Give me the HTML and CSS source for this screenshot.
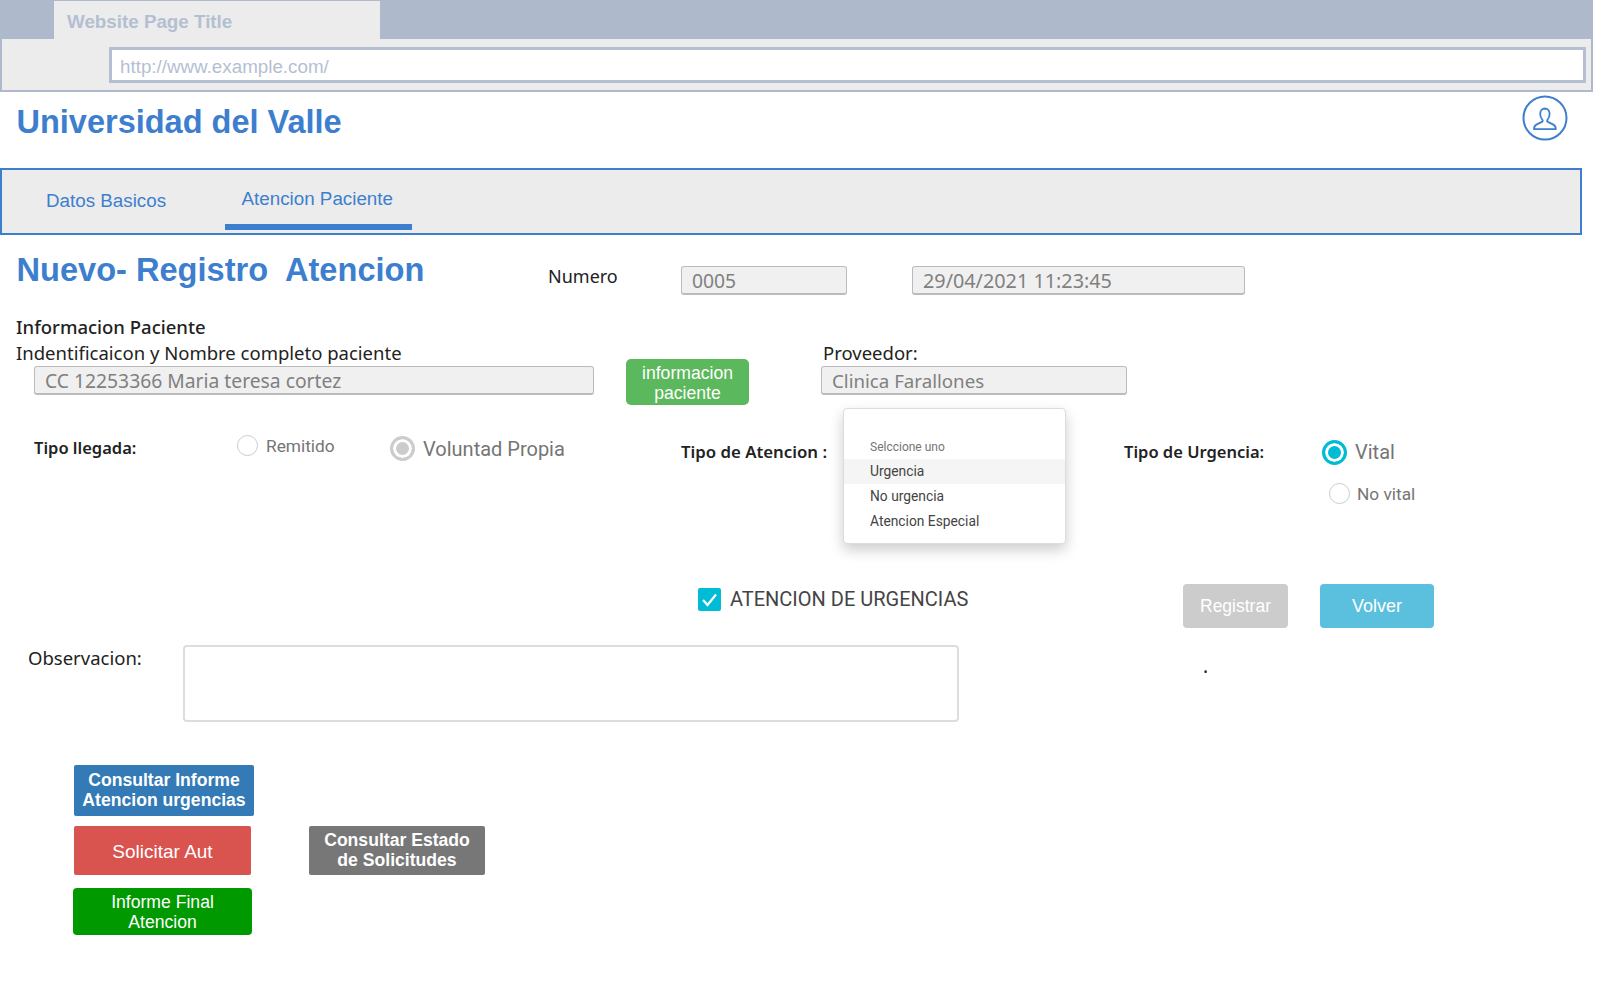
FILE: index.html
```html
<!DOCTYPE html>
<html lang="es">
<head>
    <meta charset="UTF-8">
    <title>Universidad del Valle</title>
    <link rel="stylesheet" href="styles.css">
</head>
<body>
    <!-- Barra del navegador -->
    <div class="browser">
        <div class="tab-strip">
            <div class="page-tab">Website Page Title</div>
        </div>
        <div class="address-bar">
            <div class="url">http://www.example.com/</div>
        </div>
    </div>

    <header class="site-header">
        <h1 class="site-title">Universidad del Valle</h1>
        <svg class="user-icon" width="48" height="48" viewBox="0 0 48 48" fill="none" stroke="#3d7fce">
            <circle cx="24" cy="24" r="21.500" stroke-width="2"/>
            <path stroke-width="1.800" stroke-linejoin="round" d="M24 14.500c-3 0-4.800 2.300-4.800 5.300 0 2.500.9 4.700 2.200 6 .6.700.3 1.700-.5 2.100l-5.500 2.700c-1.600.8-2.400 2.200-2.400 4.600h21.800c0-2.400-.8-3.800-2.400-4.600l-5.500-2.700c-.8-.4-1.100-1.400-.5-2.100 1.300-1.300 2.200-3.500 2.200-6 0-3-1.800-5.300-4.800-5.300z"/>
        </svg>
    </header>

    <nav class="tabs">
        <a class="tab-link">Datos Basicos</a>
        <a class="tab-link active">Atencion Paciente</a>
    </nav>

    <main>
        <div class="row-register">
            <h2 class="form-title">Nuevo- Registro&nbsp; Atencion</h2>
            <span class="numero-label">Numero</span>
            <input class="field field-numero" type="text" value="0005" disabled>
            <input class="field field-fecha" type="text" value="29/04/2021 11:23:45" disabled>
        </div>

        <div class="row-patient">
            <div class="patient-info">
                <div class="section-label section-title">Informacion Paciente</div>
                <div class="section-label">Indentificaicon y Nombre completo paciente</div>
                <input class="field field-paciente" type="text" value="CC 12253366 Maria teresa cortez" disabled>
            </div>
            <button class="btn btn-info-patient" type="button">informacion paciente</button>
            <div class="provider">
                <div class="section-label">Proveedor:</div>
                <input class="field field-proveedor" type="text" value="Clinica Farallones" disabled>
            </div>
        </div>

        <div class="row-types">
            <div class="type-label label-llegada">Tipo llegada:</div>
            <div class="option option-remitido">
                <span class="radio"></span>
                <span class="option-text">Remitido</span>
            </div>
            <div class="option option-voluntad">
                <span class="radio radio-disabled"></span>
                <span class="option-text large">Voluntad Propia</span>
            </div>
            <div class="type-label label-atencion">Tipo de Atencion :</div>
            <div class="dropdown">
                <div class="dropdown-head">Selccione uno</div>
                <div class="dropdown-item hover">Urgencia</div>
                <div class="dropdown-item">No urgencia</div>
                <div class="dropdown-item">Atencion Especial</div>
            </div>
            <div class="type-label label-urgencia">Tipo de Urgencia:</div>
            <div class="urgency-options">
                <div class="option option-vital">
                    <span class="radio radio-checked"></span>
                    <span class="option-text large">Vital</span>
                </div>
                <div class="option option-novital">
                    <span class="radio"></span>
                    <span class="option-text">No vital</span>
                </div>
            </div>
        </div>

        <div class="row-actions">
            <label class="check-urgencias">
                <svg class="checkbox" width="23" height="23" viewBox="0 0 23 23">
                    <rect width="23" height="23" rx="2" fill="#00bcd4"/>
                    <path d="M5 12l4.500 5 8.500-10.500" fill="none" stroke="#fff" stroke-width="2.200"/>
                </svg>
                ATENCION DE URGENCIAS
            </label>
            <button class="btn btn-registrar" type="button">Registrar</button>
            <button class="btn btn-volver" type="button">Volver</button>
        </div>

        <div class="row-notes">
            <label class="notes-label">Observacion:</label>
            <textarea class="notes"></textarea>
            <span class="dot">.</span>
        </div>

        <div class="row-reports">
            <div class="reports-left">
                <button class="btn btn-report btn-blue" type="button">Consultar Informe<br>Atencion urgencias</button>
                <button class="btn btn-report btn-red" type="button">Solicitar Aut</button>
                <button class="btn btn-report btn-green" type="button">Informe Final<br>Atencion</button>
            </div>
            <button class="btn btn-report btn-gray" type="button">Consultar Estado<br>de Solicitudes</button>
        </div>
    </main>
</body>
</html>
```

FILE: styles.css
```css
* {
    box-sizing: border-box;
}
body {
    margin: 0;
    background: #fff;
    font-family: "Noto Sans", sans-serif;
    color: #222;
}

/* navegador */
.browser {
    width: 1593px;
    height: 92px;
}
.tab-strip {
    height: 39px;
    padding: 1px 0 0 54px;
    background: #aeb9cc;
}
.page-tab {
    width: 326px;
    height: 38px;
    padding: 10px 0 0 13px;
    background: #ececec;
    color: #b4bfd2;
    font: bold 18.800px "Liberation Sans", sans-serif;
}
.address-bar {
    height: 53px;
    padding: 8px 5px 0 107px;
    background: #ececec;
    border: 2px solid #aeb9cc;
    border-top: 0;
}
.url {
    height: 36px;
    padding: 6px 0 0 8px;
    background: #fff;
    border: 3px solid #b4bfd2;
    color: #b4bfd2;
    font: 18.800px "Liberation Sans", sans-serif;
}

.site-header {
    display: flex;
    justify-content: space-between;
    align-items: flex-start;
    width: 1593px;
    height: 76px;
    padding: 0 24px 0 16.500px;
}
.site-title {
    margin: 12px 0 0;
    color: #3d7fce;
    font: bold 32.500px "Liberation Sans", sans-serif;
}
.user-icon {
    margin-top: 2px;
}

.tabs {
    display: flex;
    width: 1582px;
    height: 67px;
    background: #ececec;
    border: 2.500px solid #3d7fce;
    font: 18.800px "Liberation Sans", sans-serif;
}
.tab-link {
    color: #3d7fce;
    margin: 20px 0 0 44px;
}
.tab-link.active {
    height: 44.500px;
    margin: 15px 0 0 59px;
    padding: 3px 19px 0 16.500px;
    border-bottom: 6px solid #3d7fce;
}

/* formulario */
.field {
    height: 29px;
    padding: 0 10px;
    background: #f0f0f0;
    border: 1px solid #bbb;
    border-bottom-width: 2px;
    border-radius: 3px;
    color: #808080;
    font-family: "Noto Sans", sans-serif;
    font-size: 19.300px;
}
.row-register {
    display: flex;
    align-items: center;
    height: 29px;
    margin-top: 31px;
    padding-left: 16.500px;
}
.form-title {
    width: 531.500px;
    margin: -22px 0 0;
    color: #3d7fce;
    font: bold 32.600px "Liberation Sans", sans-serif;
    white-space: nowrap;
}
.numero-label {
    width: 133px;
    font-size: 18px;
    margin-top: -9px;
}
.field-numero {
    width: 166px;
}
.field-fecha {
    width: 333px;
    margin-left: 65px;
    font-size: 19.800px;
}

.row-patient {
    display: flex;
    align-items: flex-start;
    height: 91px;
    margin-top: 19px;
    padding-left: 16px;
}
.patient-info {
    width: 610px;
}
.section-label {
    height: 26px;
    font-size: 18.500px;
    line-height: 26px;
}
.section-title {
    font-weight: 500;
}
.field-paciente {
    display: block;
    width: 560px;
    margin-left: 18px;
}
.btn {
    border: 0;
    border-radius: 4px;
    color: #fff;
    font-family: "Liberation Sans", sans-serif;
    cursor: pointer;
}
.btn-info-patient {
    width: 123px;
    height: 46px;
    margin-top: 45px;
    padding: 2px 8px 0;
    background: #5cb85c;
    border-radius: 5px;
    font-size: 17.600px;
    line-height: 20px;
}
.provider {
    margin-left: 72px;
}
.provider .section-label {
    margin: 26px 0 0 2px;
}
.field-proveedor {
    display: block;
    width: 306px;
    font-size: 18.700px;
}

.row-types {
    display: flex;
    align-items: flex-start;
    height: 179px;
    padding-left: 34px;
}
.type-label {
    font-size: 16.500px;
    font-weight: 600;
    white-space: nowrap;
}
.label-llegada {
    width: 203px;
    margin-top: 31px;
}
.label-atencion {
    width: 162px;
    margin-top: 35px;
    font-size: 16.800px;
}
.label-urgencia {
    width: 198px;
    margin: 35px 0 0 58px;
}
.option {
    display: flex;
    align-items: center;
    color: #757575;
    font-family: Roboto, sans-serif;
}
.option-text {
    font-size: 17.300px;
}
.option-text.large {
    font-size: 20px;
}
.radio {
    width: 21px;
    height: 21px;
    margin-right: 8px;
    border: 1px solid #ccc;
    border-radius: 50%;
    background: #fff;
}
.radio-disabled {
    width: 25px;
    height: 25px;
    border: 3px solid #ccc;
    box-shadow: inset 0 0 0 3px #fff;
    background: #ccc;
}
.radio-checked {
    width: 25px;
    height: 25px;
    margin-right: 8px;
    border: 3px solid #00bcd4;
    box-shadow: inset 0 0 0 3px #fff;
    background: #00bcd4;
}
.option-remitido {
    width: 153px;
    margin-top: 30px;
}
.option-voluntad {
    width: 291px;
    margin-top: 31px;
}
.urgency-options {
    margin-top: 35px;
}
.option-novital {
    margin: 18px 0 0 7px;
}
.option-novital .radio {
    margin-right: 7px;
}
.option-vital .option-text {
    margin-top: -2px;
}
.dropdown {
    width: 223px;
    height: 136px;
    margin-top: 3px;
    padding-top: 29px;
    background: #fff;
    border: 1px solid #ddd;
    border-radius: 4px;
    box-shadow: 0 6px 14px rgba(0, 0, 0, 0.2);
    font-family: Roboto, sans-serif;
}
.dropdown-head {
    height: 21px;
    padding-left: 26px;
    color: #757575;
    font-size: 12px;
    line-height: 18px;
}
.dropdown-item {
    height: 25px;
    padding-left: 26px;
    color: #444;
    font-size: 13.800px;
    line-height: 25px;
}
.dropdown-item.hover {
    background: #f5f5f5;
}

.row-actions {
    display: flex;
    align-items: flex-start;
    height: 44px;
    padding-left: 698px;
}
.check-urgencias {
    display: flex;
    align-items: center;
    width: 485px;
    margin-top: 4px;
    color: #444;
    font: 20px Roboto, sans-serif;
    line-height: 21px;
}
.checkbox {
    margin-right: 9px;
}
.btn-registrar {
    width: 105px;
    height: 44px;
    padding-top: 2px;
    background: #ccc;
    font-size: 17.500px;
}
.btn-volver {
    width: 114px;
    height: 44px;
    margin-left: 32px;
    padding-top: 2px;
    background: #5bc0de;
    font-size: 18px;
}

.row-notes {
    display: flex;
    align-items: flex-start;
    height: 77px;
    margin-top: 17px;
    padding-left: 28px;
}
.notes-label {
    width: 155px;
    font-size: 18.500px;
}
.notes {
    width: 776px;
    height: 77px;
    background: #fff;
    border: 2px solid #ddd;
    border-radius: 4px;
    resize: none;
}
.dot {
    margin: 8px 0 0 244px;
    font-size: 19px;
}

.row-reports {
    display: flex;
    align-items: flex-start;
    margin-top: 43px;
    padding-left: 73px;
}
.reports-left {
    display: flex;
    flex-direction: column;
    align-items: flex-start;
    width: 236px;
}
.btn-report {
    padding: 0 0 2px;
    font-size: 17.600px;
    line-height: 20px;
}
.btn-blue {
    width: 180px;
    height: 51px;
    margin-left: 1px;
    background: #337ab7;
    font-weight: bold;
    border-radius: 2px;
}
.btn-red {
    width: 177px;
    height: 49px;
    margin: 10px 0 0 1px;
    padding: 2px 0 0;
    background: #d9534f;
    border-radius: 2px;
    font-size: 19px;
}
.btn-green {
    width: 179px;
    height: 47px;
    margin-top: 13px;
    padding: 0;
    background: #009900;
}
.btn-gray {
    width: 176px;
    height: 49px;
    margin-top: 61px;
    background: #777;
    font-weight: bold;
    border-radius: 2px;
}
```
